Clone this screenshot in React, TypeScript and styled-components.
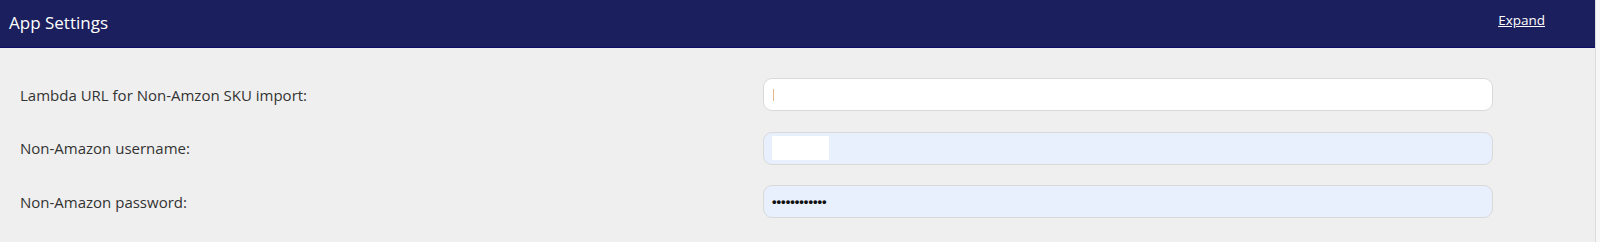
import React from "react";
import styled, { createGlobalStyle } from "styled-components";

const Global = createGlobalStyle`
  html, body { margin: 0; padding: 0; background: #f7f7f7; }
  body { font-family: "Open Sans", Lato, Arial, sans-serif; }
`;

const Page = styled.div`
  display: flex;
  height: 242px;
  padding-right: 4px;
`;

const Panel = styled.section`
  flex: 1;
  display: flex;
  flex-direction: column;
  background: #efefef;
  border-right: 1px solid #dcdcdc;
`;

const Header = styled.header`
  height: 48px;
  box-sizing: border-box;
  background: #1c1f5d;
  border-bottom: 1px solid #0c0f63;
  display: flex;
  align-items: center;
  justify-content: space-between;
  padding: 0 50px 3px 9px;
`;

const Title = styled.h2`
  margin: 0;
  font-size: 17px;
  font-weight: 400;
  color: #ffffff;
`;

const ExpandLink = styled.a`
  color: #ffffff;
  font-size: 13.5px;
  text-decoration: underline;
  cursor: pointer;
  margin-top: -4px;
`;

const Body = styled.div`
  display: grid;
  grid-template-columns: 743px 730px;
  row-gap: 20.5px;
  padding: 30px 0 0 20px;
  align-items: center;
`;

const Label = styled.label`
  font-size: 15px;
  color: #333333;
`;

const Field = styled.div<{ $autofill?: boolean }>`
  height: 33px;
  box-sizing: border-box;
  border: 1.5px solid #d9d9d9;
  border-radius: 9px;
  background: ${(p) => (p.$autofill ? "#e8f0fe" : "#ffffff")};
  display: flex;
  align-items: center;
  padding-left: 8px;
`;

const Caret = styled.span`
  width: 1px;
  height: 12px;
  margin-left: 1px;
  background: #e5b98a;
`;

const Redacted = styled.span`
  width: 57px;
  height: 24px;
  background: #ffffff;
`;

const Dots = styled.span`
  font-family: "Liberation Sans", Arial, sans-serif;
  font-size: 13px;
  font-weight: 700;
  color: #111;
`;

export default function App() {
  return (
    <>
      <Global />
      <Page>
        <Panel>
          <Header>
            <Title>App Settings</Title>
            <ExpandLink>Expand</ExpandLink>
          </Header>
          <Body>
            <Label>Lambda URL for Non-Amzon SKU import:</Label>
            <Field>
              <Caret />
            </Field>
            <Label>Non-Amazon username:</Label>
            <Field $autofill>
              <Redacted />
            </Field>
            <Label>Non-Amazon password:</Label>
            <Field $autofill>
              <Dots>••••••••••••</Dots>
            </Field>
          </Body>
        </Panel>
      </Page>
    </>
  );
}
